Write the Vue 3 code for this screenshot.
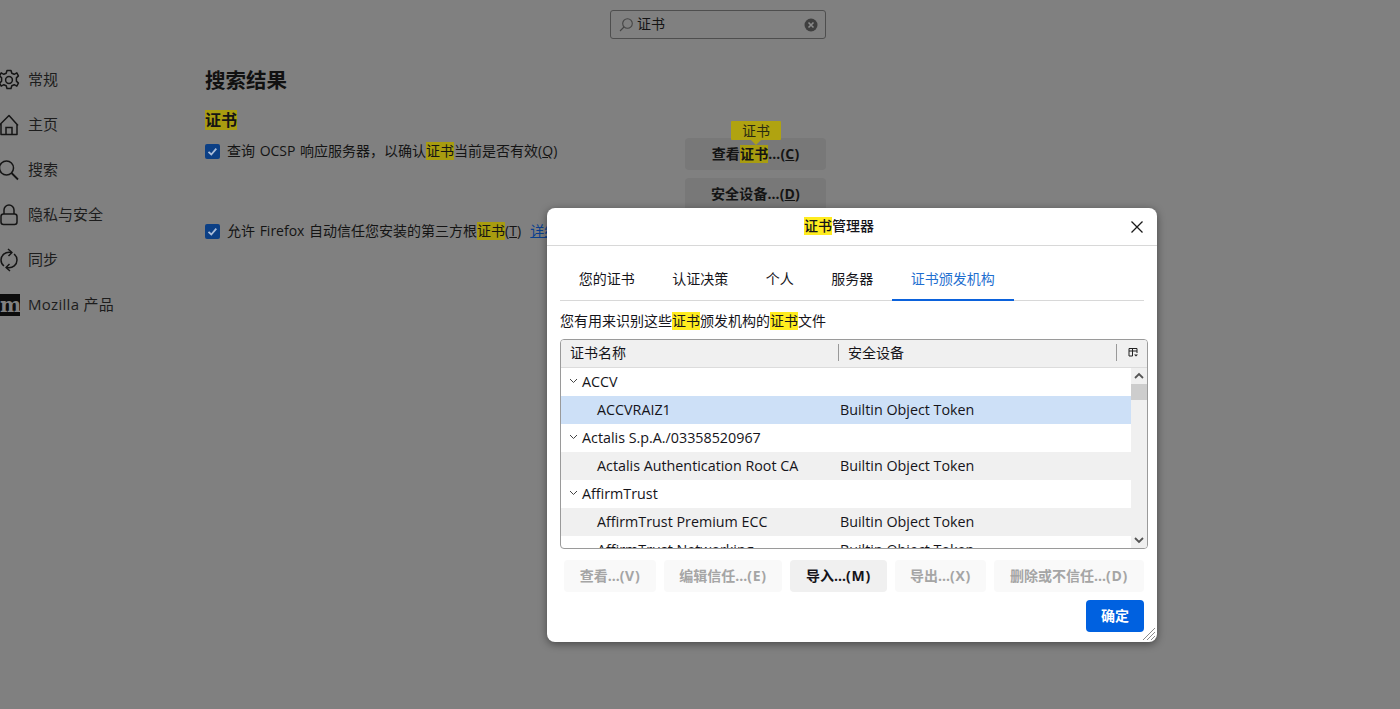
<script setup>
const navItems = [
  { label: '常规', icon: 'gear' },
  { label: '主页', icon: 'home' },
  { label: '搜索', icon: 'search' },
  { label: '隐私与安全', icon: 'lock' },
  { label: '同步', icon: 'sync' },
  { label: 'Mozilla 产品', icon: 'moz' }
]
const tabs = ['您的证书', '认证决策', '个人', '服务器', '证书颁发机构']
const rows = [
  { name: 'ACCV', group: true },
  { name: 'ACCVRAIZ1', dev: 'Builtin Object Token', cls: 'selected' },
  { name: 'Actalis S.p.A./03358520967', group: true },
  { name: 'Actalis Authentication Root CA', dev: 'Builtin Object Token', cls: 'odd' },
  { name: 'AffirmTrust', group: true },
  { name: 'AffirmTrust Premium ECC', dev: 'Builtin Object Token', cls: 'odd' },
  { name: 'AffirmTrust Networking', dev: 'Builtin Object Token', cls: '' }
]
const actions = [
  { t: '查看…', k: 'V', w: 92 },
  { t: '编辑信任…', k: 'E', w: 118 },
  { t: '导入…', k: 'M', w: 97, on: true },
  { t: '导出…', k: 'X', w: 91 },
  { t: '删除或不信任…', k: 'D', w: 150 }
]
</script>

<template>
  <div class="page">
    <div class="search-row">
      <div class="search">
        <svg class="s-ico" width="16" height="16" viewBox="0 0 16 16" fill="none" stroke="#444" stroke-width="1.1">
          <circle cx="9.5" cy="6.5" r="4.8" />
          <path d="M6 10 2 14" />
        </svg>
        <span class="s-text">证书</span>
        <svg class="s-clear" width="14" height="14" viewBox="0 0 14 14">
          <circle cx="7" cy="7" r="6.5" fill="#3f3f3f" />
          <path d="M4.500 4.500l5 5M9.500 4.500l-5 5" stroke="#8a8a8a" stroke-width="1.600" />
        </svg>
      </div>
    </div>

    <div class="body">
      <nav class="nav">
        <div v-for="n in navItems" :key="n.label" class="nav-item" :class="{ moz: n.icon === 'moz' }">
          <svg class="nav-ico" width="22" height="24" viewBox="0 0 22 24" fill="none" stroke="#151515" stroke-width="1.5">
            <template v-if="n.icon === 'gear'">
              <circle cx="9" cy="12" r="3.400" />
              <path d="M7 2.500h4l.8 2.800 2.400 1 2.600-1.400 1.600 3-2 2v3.200l2 2-1.600 3-2.600-1.400-2.400 1-.8 2.800H7l-.8-2.800-2.400-1-2.600 1.400-1.600-3 2-2v-3.200l-2-2 1.600-3 2.600 1.400 2.400-1z" stroke-linejoin="round" />
            </template>
            <template v-else-if="n.icon === 'home'">
              <path d="M-1 12.500 9 2.500l9 10M1 11v10.500h16V11" stroke-linejoin="round" />
              <path d="M6 21.500v-7h6v7" />
            </template>
            <template v-else-if="n.icon === 'search'">
              <circle cx="6.500" cy="10" r="7" />
              <path d="m11.500 15 6.500 6.500" stroke-width="1.800" />
            </template>
            <template v-else-if="n.icon === 'lock'">
              <rect x="1" y="11" width="16" height="10.500" rx="2.500" />
              <path d="M4 11V7a5 5 0 0 1 10 0v4" />
            </template>
            <template v-else-if="n.icon === 'sync'">
              <path d="M11 4.500C5 3.500 1 7.500 1 12c0 2.500 1 4.500 3 6" />
              <path d="M7 19.500c6 1 10-3 10-7.500 0-2.500-1-4.500-3-6" />
              <path d="m8 1 4 3.500L8.500 8M10 23l-4-3.500L9.500 16" stroke-linejoin="round" />
            </template>
            <template v-else>
              <rect x="-2" y="1" width="22" height="22" fill="#0c0c0c" stroke="none" />
              <text x="0" y="19" class="moz-m">m</text>
            </template>
          </svg>
          <span>{{ n.label }}</span>
        </div>
      </nav>

      <main class="main">
        <h1 class="h1">搜索结果</h1>
        <h2 class="h2"><mark class="hl big">证书</mark></h2>
        <div class="opt opt-first">
          <div class="opt-left">
            <span class="check">
              <svg width="15" height="15" viewBox="0 0 15 15" fill="none" stroke="#a9bcd8" stroke-width="1.800"><path d="m3.500 7.800 2.800 2.700 5-5.800" /></svg>
            </span>
            <span>查询 OCSP 响应服务器，以确认<mark class="hl">证书</mark>当前是否有效(<u>Q</u>)</span>
          </div>
          <div class="btns">
            <button class="pbtn">查看<mark class="hl">证书</mark>…(<u>C</u>)<span class="tip">证书</span></button>
            <button class="pbtn">安全设备…(<u>D</u>)</button>
          </div>
        </div>
        <div class="opt opt-second">
          <div class="opt-left">
            <span class="check">
              <svg width="15" height="15" viewBox="0 0 15 15" fill="none" stroke="#a9bcd8" stroke-width="1.800"><path d="m3.500 7.800 2.800 2.700 5-5.800" /></svg>
            </span>
            <span>允许 Firefox 自动信任您安装的第三方根<mark class="hl">证书</mark>(<u>T</u>)&nbsp;&nbsp;<a class="link">详细了解</a></span>
          </div>
        </div>
      </main>
    </div>

    <section class="dialog">
      <header class="d-head">
        <span class="d-title"><mark class="hl2">证书</mark>管理器</span>
        <svg class="d-close" width="14" height="14" viewBox="0 0 14 14" stroke="#1a1a1a" stroke-width="1.300"><path d="m1.500 1.500 11 11M12.500 1.500l-11 11" /></svg>
      </header>
      <div class="d-body">
        <div class="tabs">
          <div v-for="(t, i) in tabs" :key="t" class="tab" :class="{ active: i === 4 }">{{ t }}</div>
        </div>
        <p class="desc">您有用来识别这些<mark class="hl2">证书</mark>颁发机构的<mark class="hl2">证书</mark>文件</p>

        <div class="tree">
          <div class="t-head">
            <div class="c1">证书名称</div>
            <div class="c2">安全设备</div>
            <div class="c3">
              <svg width="11" height="11" viewBox="0 0 11 11" fill="none" stroke="#222" stroke-width="1"><path d="M1 9V1.500h8V6M1 4h8M4.500 1.500V9H1" /><path d="M6 7.500h4l-2 2z" fill="#222" stroke="none" /></svg>
            </div>
          </div>
          <div class="t-wrap">
            <div class="t-rows">
              <div v-for="r in rows" :key="r.name" class="t-row" :class="r.cls">
                <template v-if="r.group">
                  <svg class="chev" width="9" height="6" viewBox="0 0 9 6" fill="none" stroke="#444" stroke-width="1"><path d="m1 1 3.500 3.500L8 1" /></svg>
                  <span>{{ r.name }}</span>
                </template>
                <template v-else>
                  <span class="r-name">{{ r.name }}</span>
                  <span class="r-dev">{{ r.dev }}</span>
                </template>
              </div>
            </div>
            <div class="sbar">
              <svg width="16" height="16" viewBox="0 0 16 16" fill="none" stroke="#555" stroke-width="1.800"><path d="m4 10 4-4 4 4" /></svg>
              <div class="thumb"></div>
              <div class="s-fill"></div>
              <svg width="16" height="16" viewBox="0 0 16 16" fill="none" stroke="#555" stroke-width="1.800"><path d="m4 6 4 4 4-4" /></svg>
            </div>
          </div>
        </div>

        <div class="actions">
          <button v-for="a in actions" :key="a.k" class="abtn" :class="{ on: a.on }" :style="{ width: a.w + 'px' }">{{ a.t }}<span class="key">({{ a.k }})</span></button>
        </div>
        <div class="foot"><button class="ok">确定</button></div>
      </div>
      <svg class="grip" width="14" height="14" viewBox="0 0 14 14" stroke="#8a8a8a" stroke-width="1"><path d="M13 1 1 13M13 5 5 13M13 9l-4 4" /></svg>
    </section>
  </div>
</template>

<style>
body { margin: 0; background: #808080; }
</style>

<style scoped>
.page {
  position: relative;
  width: 1400px;
  height: 709px;
  overflow: hidden;
  background: #808080;
  color: #141414;
  font-family: "Open Sans", "Noto Sans CJK SC", sans-serif;
  font-size: 14px;
}
.search-row { display: flex; padding: 10px 574px 0 610px; height: 39px; box-sizing: border-box; }
.search {
  flex: 1; height: 29px; box-sizing: border-box; display: flex; align-items: center;
  border: 1px solid #4e4e4e; border-radius: 3px; padding: 0 7px 0 7px;
}
.s-text { margin-left: 3px; font-size: 14px; flex: 1; line-height: 17px; padding-bottom: 2px; }
.body { display: flex; }
.nav { width: 205px; flex: none; padding-top: 18px; }
.nav-item { height: 45px; display: flex; align-items: center; font-size: 15px; color: #1d1d1d; }
.nav-item span { margin-left: 28px; line-height: 45px; }
.nav-item.moz span { letter-spacing: .3px; }
.nav-ico { position: absolute; left: 0; overflow: visible; }
.moz-m { font: 900 20px "DejaVu Serif", serif; fill: #808080; stroke: none; }
.main { width: 621px; }
.h1 { margin: 0; font-size: 20.500px; font-weight: 700; line-height: 30px; padding-top: 26px; color: #111; }
.h2 { margin: 0; font-size: 16px; font-weight: 700; line-height: 20px; padding-top: 15px; }
.hl { background: #a89c10; color: inherit; display: inline-block; line-height: 18px; }
.hl.big { line-height: 20px; }
.hl2 { background: #ffec1f; color: inherit; display: inline-block; line-height: 18px; }
.opt { display: flex; justify-content: space-between; align-items: flex-start; }
.opt-first { margin-top: 8px; height: 80px; }
.opt-second { margin-top: 1px; }
.opt-left { display: flex; align-items: center; padding-top: 3px; font-size: 14px; line-height: 20px; white-space: nowrap; word-spacing: 1px; }
.opt-second .opt-left { width: 400px; padding-top: 2px; }
.check {
  width: 15px; height: 15px; border-radius: 2px; background: #0b3f85; margin-right: 7px; flex: none;
  display: inline-flex;
}
.link { color: #0a3f8f; text-decoration: underline; }
.btns { display: flex; flex-direction: column; gap: 8px; }
.pbtn {
  position: relative; width: 141px; height: 32px; border: 0; border-radius: 4px; background: #787878;
  font: 700 14px "Open Sans", "Noto Sans CJK SC", sans-serif; color: #141414; padding: 0 0 3px;
  letter-spacing: .15px;
}
.tip {
  position: absolute; left: 46px; top: -17px; width: 50px; height: 19px; background: #b0a310; font-weight: 400;
  font-size: 14px; line-height: 19px; color: #2a2a10; border-radius: 1px; letter-spacing: 0;
}
.tip::after {
  content: ""; position: absolute; left: 20px; top: 19px; border: 5px solid transparent; border-top-color: #b0a310; border-bottom: 0;
}
.dialog {
  position: absolute; left: 547px; top: 208px; width: 610px; height: 434px; box-sizing: border-box;
  background: #fff; border-radius: 8px; box-shadow: 0 2px 8px rgba(0,0,0,.45); color: #15141a;
  display: flex; flex-direction: column; font-size: 14.300px;
}
.d-head {
  height: 38px; flex: none; border-bottom: 1px solid #d8d8d8; display: flex; align-items: center; justify-content: center;
  position: relative; box-sizing: border-box; padding: 0 26px 3px 0;
}
.d-title { font-size: 14px; font-weight: 500; }
.d-close { position: absolute; right: 13px; top: 12px; }
.d-body { padding: 0 13px; display: flex; flex-direction: column; flex: 1; min-height: 0; }
.tabs { display: flex; height: 55px; flex: none; border-bottom: 1px solid #d8d8d8; box-sizing: border-box; padding-top: 15px; }
.tab { padding: 0 18.750px; line-height: 36px; height: 40px; box-sizing: border-box; font-size: 14px; white-space: nowrap; }
.tab.active { color: #1f6fd0; border-bottom: 2px solid #0b62dc; }
.desc { margin: 10px 0 0; font-size: 14px; line-height: 20px; height: 28px; }
.tree { border: 1px solid #9a9a9a; border-radius: 4px; height: 210px; box-sizing: border-box; overflow: hidden; flex: none; width: 588px; }
.t-head { display: flex; height: 28px; background: #f0f0f0; border-bottom: 1px solid #dcdcdc; box-sizing: border-box; align-items: center; font-size: 14px; padding-bottom: 2px; }
.c1 { width: 278px; padding-left: 9px; box-sizing: border-box; border-right: 1px solid #999; line-height: 17px; }
.c2 { width: 278px; padding-left: 9px; box-sizing: border-box; border-right: 1px solid #999; line-height: 17px; }
.c3 { flex: 1; display: flex; justify-content: center; padding-left: 3px; }
.t-wrap { display: flex; height: 180px; overflow: hidden; }
.t-rows { width: 570px; flex: none; overflow: hidden; }
.t-row { height: 28px; display: flex; align-items: center; white-space: nowrap; font-size: 14.300px; padding-bottom: 2px; box-sizing: border-box; }
.t-row.selected { background: #cde0f7; }
.t-row.odd { background: #f0f0f0; }
.chev { margin: 0 4px 0 8px; }
.r-name { width: 279px; padding-left: 36px; box-sizing: border-box; flex: none; }
.sbar { width: 16px; flex: none; background: #f0f0f0; display: flex; flex-direction: column; height: 180px; }
.sbar svg { flex: none; }
.thumb { height: 16px; background: #cdcdcd; flex: none; }
.s-fill { flex: 1; }
.actions { display: flex; gap: 8px; margin: 11px 0 0 4px; }
.abtn {
  height: 32px; border: 0; border-radius: 4px; background: #f9f9f9; padding: 0 0 2px; white-space: nowrap;
  font: 700 14px "Open Sans", "Noto Sans CJK SC", sans-serif; color: #a5a5a5;
}
.key { letter-spacing: .7px; }
.abtn.on { background: #f0f0f0; color: #15141a; }
.foot { display: flex; justify-content: flex-end; margin-top: 8px; }
.ok {
  width: 58px; height: 32px; border: 0; border-radius: 4px; background: #0061e0; color: #fff; padding: 0 0 2px;
  font: 700 14px "Open Sans", "Noto Sans CJK SC", sans-serif;
}
.grip { position: absolute; right: 1px; bottom: 1px; }
</style>
